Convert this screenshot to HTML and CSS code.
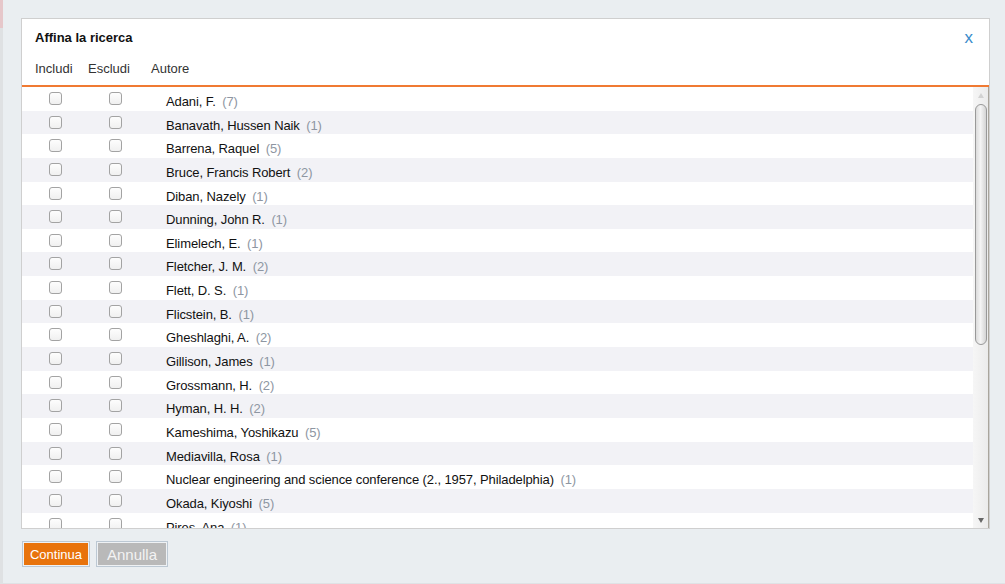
FILE: index.html
```html
<!DOCTYPE html>
<html lang="it">
<head>
<meta charset="utf-8">
<title>Affina la ricerca</title>
<link rel="stylesheet" href="styles.css">
</head>
<body>
<div class="page">
  <div class="strip"><div class="strip-top"></div></div>
  <div class="main">
    <div class="dialog">
      <div class="header">
        <div class="title-row">
          <span class="title">Affina la ricerca</span>
          <span class="close">x</span>
        </div>
        <div class="cols">
          <span class="col col-inc">Includi</span>
          <span class="col col-exc">Escludi</span>
          <span class="col">Autore</span>
        </div>
      </div>
      <div class="list">
        <div class="rows">
          <div class="row"><span class="cb"></span><span class="cb cb2"></span><span class="name">Adani, F. <span class="count">(7)</span></span></div>
          <div class="row"><span class="cb"></span><span class="cb cb2"></span><span class="name">Banavath, Hussen Naik <span class="count">(1)</span></span></div>
          <div class="row"><span class="cb"></span><span class="cb cb2"></span><span class="name">Barrena, Raquel <span class="count">(5)</span></span></div>
          <div class="row"><span class="cb"></span><span class="cb cb2"></span><span class="name">Bruce, Francis Robert <span class="count">(2)</span></span></div>
          <div class="row"><span class="cb"></span><span class="cb cb2"></span><span class="name">Diban, Nazely <span class="count">(1)</span></span></div>
          <div class="row"><span class="cb"></span><span class="cb cb2"></span><span class="name">Dunning, John R. <span class="count">(1)</span></span></div>
          <div class="row"><span class="cb"></span><span class="cb cb2"></span><span class="name">Elimelech, E. <span class="count">(1)</span></span></div>
          <div class="row"><span class="cb"></span><span class="cb cb2"></span><span class="name">Fletcher, J. M. <span class="count">(2)</span></span></div>
          <div class="row"><span class="cb"></span><span class="cb cb2"></span><span class="name">Flett, D. S. <span class="count">(1)</span></span></div>
          <div class="row"><span class="cb"></span><span class="cb cb2"></span><span class="name">Flicstein, B. <span class="count">(1)</span></span></div>
          <div class="row"><span class="cb"></span><span class="cb cb2"></span><span class="name">Gheshlaghi, A. <span class="count">(2)</span></span></div>
          <div class="row"><span class="cb"></span><span class="cb cb2"></span><span class="name">Gillison, James <span class="count">(1)</span></span></div>
          <div class="row"><span class="cb"></span><span class="cb cb2"></span><span class="name">Grossmann, H. <span class="count">(2)</span></span></div>
          <div class="row"><span class="cb"></span><span class="cb cb2"></span><span class="name">Hyman, H. H. <span class="count">(2)</span></span></div>
          <div class="row"><span class="cb"></span><span class="cb cb2"></span><span class="name">Kameshima, Yoshikazu <span class="count">(5)</span></span></div>
          <div class="row"><span class="cb"></span><span class="cb cb2"></span><span class="name">Mediavilla, Rosa <span class="count">(1)</span></span></div>
          <div class="row"><span class="cb"></span><span class="cb cb2"></span><span class="name">Nuclear engineering and science conference (2., 1957, Philadelphia) <span class="count">(1)</span></span></div>
          <div class="row"><span class="cb"></span><span class="cb cb2"></span><span class="name">Okada, Kiyoshi <span class="count">(5)</span></span></div>
          <div class="row"><span class="cb"></span><span class="cb cb2"></span><span class="name">Pires, Ana <span class="count">(1)</span></span></div>
        </div>
        <div class="scrollbar">
          <div class="sb-btn"><span class="tri-up"></span></div>
          <div class="sb-track"><div class="sb-thumb"></div></div>
          <div class="sb-btn"><span class="tri-down"></span></div>
        </div>
      </div>
    </div>
    <div class="buttons">
      <span class="btn btn-ok">Continua</span>
      <span class="btn btn-cancel">Annulla</span>
    </div>
  </div>
</div>
</body>
</html>
```

FILE: styles.css
```css
html, body {
  margin: 0;
  padding: 0;
}
body {
  background: #eaeef1;
  font-family: "Liberation Sans", Arial, sans-serif;
  font-size: 13px;
  color: #111;
  width: 1005px;
  height: 584px;
  overflow: hidden;
}
.page {
  display: flex;
  height: 583px;
  border-bottom: 1px solid #dfe2e5;
}
.strip {
  width: 3px;
  background: #dfe1e3;
}
.strip-top {
  height: 28px;
  background: #e6c7ca;
}
.main {
  flex: 1;
  padding: 18px 0 0 18px;
}
.dialog {
  width: 967px;
  border: 1px solid #cfcfcf;
  background: #fff;
}
.header {
  border-bottom: 2px solid #f07a32;
  padding-bottom: 8px;
}
.title-row {
  display: flex;
  align-items: flex-start;
  justify-content: space-between;
  padding: 11px 16px 0 13px;
  height: 16px;
}
.title {
  font-weight: bold;
  line-height: 16px;
}
.close {
  color: #3a8ccb;
  font-size: 17px;
  line-height: 16px;
}
.cols {
  display: flex;
  margin-top: 15px;
  padding-left: 13px;
  line-height: 16px;
  height: 16px;
  color: #333;
}
.col-inc { width: 53px; }
.col-exc { width: 63px; }
.list {
  display: flex;
  height: 441px;
}
.rows {
  flex: 1;
  overflow: hidden;
}
.row {
  display: flex;
  align-items: flex-start;
  height: 23.65px;
  padding-left: 27px;
  background: #fff;
  white-space: nowrap;
}
.row:nth-child(even) {
  background: #f2f2f6;
}
.cb {
  box-sizing: border-box;
  width: 13px;
  height: 13px;
  margin-top: 5px;
  border: 1px solid #a3a3a3;
  border-radius: 3px;
  background: linear-gradient(#fdfdfd, #f0f0f0);
  flex: none;
}
.cb2 {
  margin-left: 47px;
}
.name {
  margin-left: 44px;
  margin-top: 7px;
  line-height: 16px;
  letter-spacing: -0.1px;
}
.count {
  color: #8e96a2;
  margin-left: 3px;
}
.scrollbar {
  width: 15px;
  border-right: 1px solid #a9a59c;
  display: flex;
  flex-direction: column;
  background: linear-gradient(to right, #f6f6f6, #ebebeb);
}
.sb-btn {
  height: 16px;
  display: flex;
  align-items: center;
  justify-content: center;
}
.tri-up {
  width: 0;
  height: 0;
  border-left: 3px solid transparent;
  border-right: 3px solid transparent;
  border-bottom: 5px solid #d2d2d2;
  margin-top: 1px;
}
.tri-down {
  width: 0;
  height: 0;
  border-left: 3px solid transparent;
  border-right: 3px solid transparent;
  border-top: 5px solid #666;
  margin-top: 1px;
}
.sb-track {
  flex: 1;
}
.sb-thumb {
  box-sizing: border-box;
  margin: 1px 0 0 2px;
  width: 12px;
  height: 241px;
  border: 1px solid #999;
  border-radius: 7px;
  background: linear-gradient(to right, #dcdcdc, #f4f4f4 45%, #d4d4d4);
}
.buttons {
  display: flex;
  gap: 6px;
  margin: 12px 0 0 1px;
}
.btn {
  box-sizing: border-box;
  height: 26px;
  border: 1px solid #bcc8d3;
  box-shadow: inset 0 0 0 1px #eef1f4;
  display: flex;
  align-items: center;
  justify-content: center;
  color: #fff;
}
.btn-ok {
  width: 68px;
  background: #e8730c;
  font-size: 13px;
}
.btn-cancel {
  width: 72px;
  background: #b9b9b9;
  color: #f3f3f3;
  font-size: 15px;
}
```
